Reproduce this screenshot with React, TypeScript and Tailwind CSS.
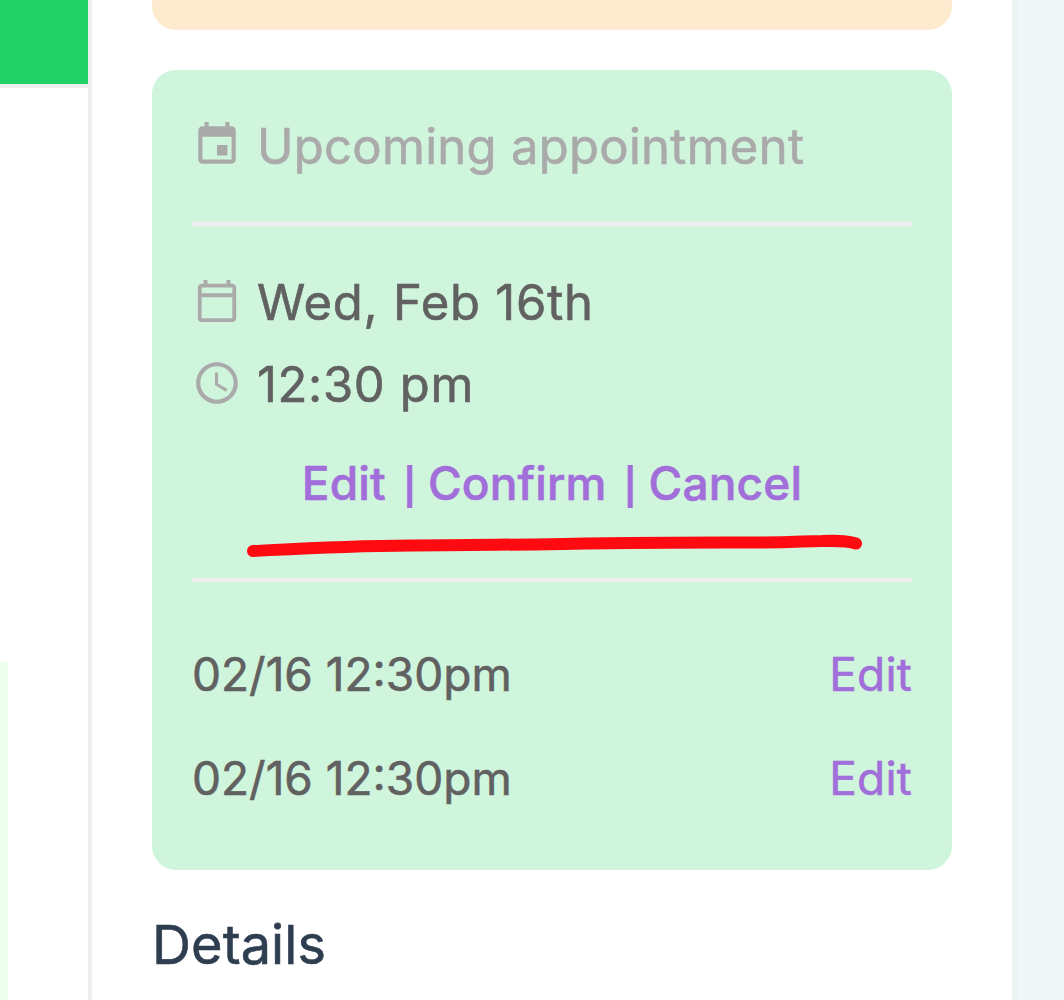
import { MdEvent, MdOutlineCalendarToday, MdSchedule } from "react-icons/md"

type Appointment = {
  id: number
  label: string
}

const APPOINTMENTS: Appointment[] = [
  { id: 1, label: "02/16 12:30pm" },
  { id: 2, label: "02/16 12:30pm" },
]

export default function App() {
  return (
    <div className="flex h-[1000px] w-[1064px] overflow-hidden bg-white font-['Inter','Liberation_Sans',sans-serif] [-webkit-text-stroke:0.6px]">
      <ConversationPane />
      <main className="flex w-[920px] shrink-0 flex-col px-[60px]">
        <div className="h-[30px] shrink-0 rounded-b-[24px] bg-[#feebcf]" />
        <AppointmentCard />
        <h2 className="mt-[39px] text-[54px] leading-[72px] tracking-[0.1px] text-[#2e3e50]">Details</h2>
      </main>
      <div className="flex-1 border-l-[5px] border-[#edf2f3] bg-[#f0f7f7]" />
    </div>
  )
}

function ConversationPane() {
  return (
    <aside className="flex w-[92px] shrink-0 flex-col border-r-4 border-[#eee]">
      <div className="h-[88px] shrink-0 border-b-4 border-[#eee] bg-[#22d168]" />
      <div className="mt-[574px] w-2 flex-1 bg-[#efffef]" />
    </aside>
  )
}

function AppointmentCard() {
  return (
    <section className="relative mt-10 flex h-[800px] shrink-0 flex-col rounded-[24px] bg-[#d0f5dd] p-10 text-[#616161]">
      <header className="flex h-[72px] items-center text-[49px] text-[#aaa]">
        <IconSlot>
          <MdEvent className="size-[50px]" />
        </IconSlot>
        <span className="whitespace-nowrap pt-0.5 tracking-[0.28px]">Upcoming appointment</span>
      </header>

      <hr className="mt-10 border-t-4 border-[#eee]" />

      <div className="mt-[35px] flex h-[82px] items-center text-[49px]">
        <IconSlot>
          <MdOutlineCalendarToday className="size-[46px]" />
        </IconSlot>
        <span className="whitespace-nowrap pt-0.5 tracking-[0.75px]">Wed, Feb 16th</span>
      </div>
      <div className="flex h-[82px] items-center text-[49px]">
        <IconSlot>
          <MdSchedule className="size-[50px]" />
        </IconSlot>
        <span className="whitespace-nowrap pt-0.5 tracking-[0.65px]">12:30 pm</span>
      </div>

      <div className="flex h-[116px] items-center justify-center gap-[18px] text-[46px] font-medium tracking-[0.15px] text-[#a16eda]">
        <a>Edit</a>
        <Separator />
        <a>Confirm</a>
        <Separator />
        <a>Cancel</a>
      </div>

      <hr className="mt-[37px] border-t-4 border-[#eee]" />

      <ul className="mt-10">
        {APPOINTMENTS.map((item) => (
          <li key={item.id} className="flex h-[104px] items-center justify-between text-[46px]">
            <span>{item.label}</span>
            <a className="tracking-[0.2px] text-[#a16eda]">Edit</a>
          </li>
        ))}
      </ul>

      <Underline />
    </section>
  )
}

function IconSlot({ children }: { children: React.ReactNode }) {
  return <span className="mb-0.5 mr-[15px] flex size-[50px] shrink-0 items-center justify-center text-[#aaa]">{children}</span>
}

function Separator() {
  return <span className="-mx-px w-2 pt-[7px] text-center text-[36px] font-bold leading-[56px] [-webkit-text-stroke:0px]">|</span>
}

// hand drawn marker stroke over the actions
function Underline() {
  return (
    <svg className="absolute left-[90px] top-[456px] h-[40px] w-[630px]" viewBox="0 0 630 40" fill="none">
      <path
        d="M11 25C60 22.500 100 20 170 19.500C300 19 380 16 500 16.500C550 17 560 15 580 15C600 14.500 607 15 614 17.500"
        stroke="#ff0a10"
        strokeWidth="12"
        strokeLinecap="round"
        strokeLinejoin="round"
      />
    </svg>
  )
}
